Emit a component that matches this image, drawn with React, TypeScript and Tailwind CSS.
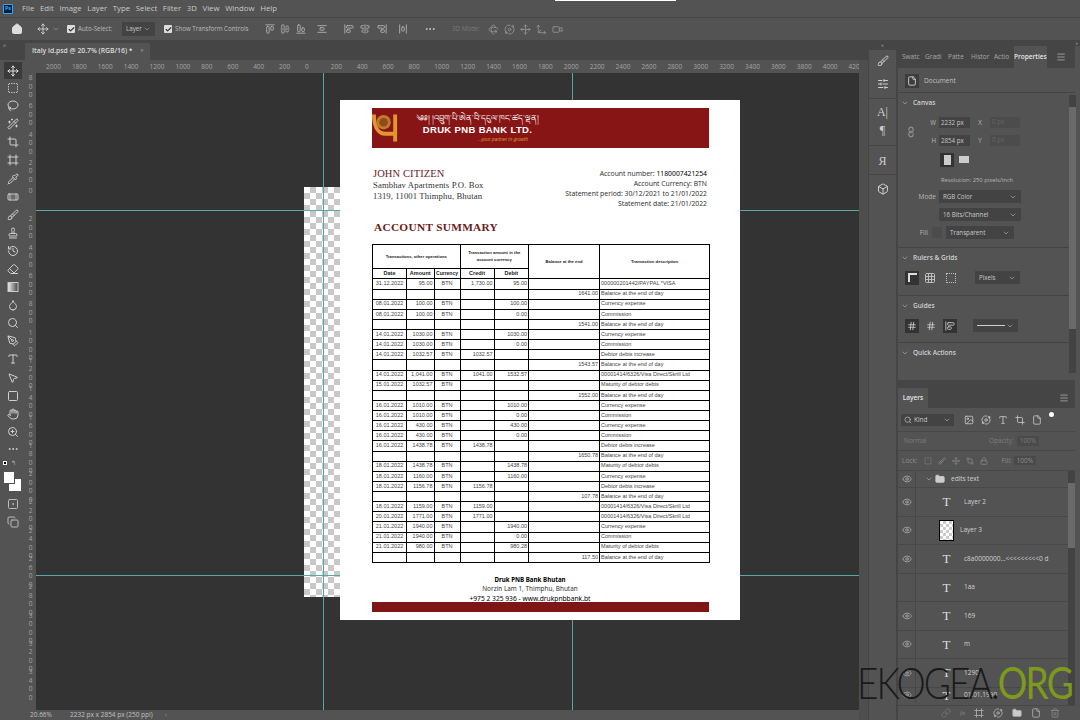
import {
  AlignCenterHorizontal,
  AlignEndHorizontal,
  AlignHorizontalSpaceAround,
  AlignStartHorizontal,
  AlignCenterVertical,
  AlignEndVertical,
  AlignStartVertical,
  AlignVerticalSpaceAround,
  Bandage,
  Box,
  Brush,
  Check,
  ChevronDown,
  Copy,
  Crop,
  Droplet,
  Ellipsis,
  Eraser,
  Eye,
  File,
  Folder,
  Frame,
  Grid3x3,
  Hand,
  Hash,
  History,
  House,
  Image,
  Link,
  Lasso,
  Lock,
  Menu,
  MousePointer2,
  Move,
  Move3d,
  Orbit,
  PenTool,
  Pipette,
  Rotate3d,
  Search,
  SlidersHorizontal,
  Square,
  SquareDashed,
  SquareDot,
  Stamp,
  Trash2,
  Type,
  Video,
  WandSparkles,
  ZoomIn,
} from "lucide-react";

const menuItems = ["File", "Edit", "Image", "Layer", "Type", "Select", "Filter", "3D", "View", "Window", "Help"];

function GradientIcon({ className }: { className?: string; strokeWidth?: number }) {
  return (
    <svg viewBox="0 0 12 12" className={className}>
      <defs>
        <linearGradient id="toolGradient">
          <stop offset="0" stopColor="#eee" />
          <stop offset="1" stopColor="#444" />
        </linearGradient>
      </defs>
      <rect x="1" y="1.5" width="10" height="9" fill="url(#toolGradient)" stroke="#ccc" />
    </svg>
  );
}

const toolIcons = [
  SquareDashed, Lasso, WandSparkles, Crop, Frame, Pipette, Bandage, Brush, Stamp,
  History, Eraser, GradientIcon, Droplet, Search, PenTool, Type, MousePointer2, Square, Hand, ZoomIn,
];

const hRuler = ["2000", "1800", "1600", "1400", "1200", "1000", "800", "600", "400", "200", "0", "200", "400", "600", "800", "1000", "1200", "1400", "1600", "1800", "2000", "2200", "2400", "2600", "2800", "3000", "3200", "3400", "3600", "3800", "4000", "4200"];
const vRuler = ["800", "600", "400", "200", "0", "200", "400", "600", "800", "1000", "1200", "1400", "1600", "1800", "2000", "2200", "2400", "2600", "2800", "3000", "3200", "3400"];

const visa = "00001414/6326/Visa Direct/Skrill Ltd";

// date, amount, credit, debit, balance, description
const rows: string[][] = [
  ["31.12.2022", "95.00", "1,730.00", "95.00", "", "000000201442/PAYPAL *VISA"],
  ["", "", "", "", "1641.00", "Balance at the end of day"],
  ["08.01.2022", "100.00", "", "100.00", "", "Currency expense"],
  ["08.01.2022", "100.00", "", "0.00", "", "Commission"],
  ["", "", "", "", "1541.00", "Balance at the end of day"],
  ["14.01.2022", "1030.00", "", "1030.00", "", "Currency expense"],
  ["14.01.2022", "1030.00", "", "0.00", "", "Commission"],
  ["14.01.2022", "1032.57", "1032.57", "", "", "Debtor debts increase"],
  ["", "", "", "", "1543.57", "Balance at the end of day"],
  ["14.01.2022", "1,041.00", "1041.00", "1532.57", "", visa],
  ["15.01.2022", "1032.57", "", "", "", "Maturity of debtor debts"],
  ["", "", "", "", "1552.00", "Balance at the end of day"],
  ["16.01.2022", "1010.00", "", "1010.00", "", "Currency expense"],
  ["16.01.2022", "1010.00", "", "0.00", "", "Commission"],
  ["16.01.2022", "430.00", "", "430.00", "", "Currency expense"],
  ["16.01.2022", "430.00", "", "0.00", "", "Commission"],
  ["16.01.2022", "1438.78", "1438.78", "", "", "Debtor debts increase"],
  ["", "", "", "", "1650.78", "Balance at the end of day"],
  ["18.01.2022", "1438.78", "", "1438.78", "", "Maturity of debtor debts"],
  ["18.01.2022", "1160.00", "", "1160.00", "", "Currency expense"],
  ["18.01.2022", "1156.78", "1156.78", "", "", "Debtor debts increase"],
  ["", "", "", "", "107.78", "Balance at the end of day"],
  ["18.01.2022", "1159.00", "1159.00", "", "", visa],
  ["20.01.2022", "1771.00", "1771.00", "", "", visa],
  ["21.01.2022", "1940.00", "", "1940.00", "", "Currency expense"],
  ["21.01.2022", "1940.00", "", "0.00", "", "Commission"],
  ["21.01.2022", "980.00", "", "980.28", "", "Maturity of debtor debts"],
  ["", "", "", "", "117.50", "Balance at the end of day"],
];

const layers = [
  { name: "Layer 2", eye: true },
  { name: "Layer 3", eye: true, thumb: true },
  { name: "c8a0000000...<<<<<<<<<0 d", eye: true },
  { name: "1aa", eye: false },
  { name: "169", eye: true },
  { name: "m", eye: true },
  { name: "1290", eye: true },
];

function Dropdown({ label, className }: { label: string; className: string }) {
  return (
    <div className={`flex h-[13px] items-center justify-between bg-[#434343] px-1 text-[6.2px] text-[#c8c8c8] ${className}`}>
      <span>{label}</span>
      <ChevronDown className="h-2 w-2 text-[#aaa]" />
    </div>
  );
}

function SectionTitle({ label }: { label: string }) {
  return (
    <div className="flex items-center gap-1 pl-[3px] text-[6.5px] font-semibold text-[#d0d0d0]">
      <ChevronDown className="h-2 w-2 text-[#aaa]" />
      <span>{label}</span>
    </div>
  );
}

function PropertiesPanel() {
  return (
    <div className="flex h-[334px] flex-col bg-[#535353]">
      <div className="flex h-[22px] shrink-0 items-stretch bg-[#454545] text-[6.5px] text-[#a8a8a8]">
        <div className="flex flex-1 items-center gap-[3px] pl-[4px]">
          <span className="w-[20px]">Swatc</span>
          <span className="w-[20px]">Gradi</span>
          <span className="w-[20px]">Patte</span>
          <span className="w-[20px]">Histor</span>
          <span className="w-[20px]">Actio</span>
        </div>
        <div className="flex w-[37px] items-center justify-center bg-[#535353] font-semibold text-[#e4e4e4]">Properties</div>
        <div className="flex w-[33px] items-center justify-center">
          <Menu className="h-2.5 w-2.5" />
        </div>
      </div>
      <div className="flex h-[25px] shrink-0 items-center gap-[5px] border-b border-[#444] pl-[7px] pt-[2px] text-[6.5px] text-[#c0c0c0]">
        <div className="flex h-[14px] w-[14px] items-center justify-center bg-[#3d3d3d]">
          <File className="h-2.5 w-2.5 text-[#ddd]" />
        </div>
        Document
      </div>
      <div className="flex min-h-0 flex-1">
        <div className="w-[171px] shrink-0">
          <div className="flex h-[155px] flex-col border-b border-[#444] pt-[5px]">
            <SectionTitle label="Canvas" />
            <div className="mt-[8px] flex">
              <div className="flex w-[26px] items-center justify-center pt-[2px]">
                <Link className="h-2.5 w-2.5 rotate-[-45deg] text-[#aaa]" />
              </div>
              <div className="flex flex-col gap-[5px] text-[6.2px] text-[#b8b8b8]">
                {[
                  ["W", "2232 px", "X"],
                  ["H", "2854 px", "Y"],
                ].map(([a, v, b]) => (
                  <div key={a} className="flex h-[13px] items-center">
                    <span className="w-[15px] text-right pr-[3px]">{a}</span>
                    <span className="flex h-[11px] w-[31px] items-center bg-[#434343] pl-[2px] text-[#c8c8c8]">{v}</span>
                    <span className="w-[20px] text-center">{b}</span>
                    <span className="h-[11px] w-[30px] bg-[#4c4c4c] pl-[2px] text-[#666]">0 px</span>
                  </div>
                ))}
              </div>
            </div>
            <div className="mt-[6px] flex gap-[3px] pl-[42px]">
              <div className="flex h-[14px] w-[14px] items-center justify-center bg-[#333]">
                <div className="h-[10px] w-[7px] bg-[#ccc]" />
              </div>
              <div className="flex h-[14px] w-[14px] items-center justify-center">
                <div className="h-[7px] w-[10px] bg-[#ccc]" />
              </div>
            </div>
            <div className="mt-[9px] pl-[43px] text-[5.8px] text-[#b8b8b8]">Resolution: 250 pixels/inch</div>
            <div className="mt-[6px] flex flex-col gap-[5px] text-[6.5px] text-[#b8b8b8]">
              <div className="flex items-center">
                <span className="w-[38px] text-right">Mode</span>
                <Dropdown label="RGB Color" className="ml-[3px] w-[82px]" />
              </div>
              <div className="pl-[41px]">
                <Dropdown label="16 Bits/Channel" className="w-[82px]" />
              </div>
              <div className="flex items-center">
                <span className="w-[30px] text-right">Fill</span>
                <div className="ml-[4px] h-[11px] w-[10px] bg-[#4c4c4c]" />
                <Dropdown label="Transparent" className="ml-[4px] w-[68px]" />
              </div>
            </div>
          </div>
          <div className="flex h-[48px] flex-col gap-[8px] border-b border-[#444] pt-[5px]">
            <SectionTitle label="Rulers & Grids" />
            <div className="flex items-center gap-[4px] pl-[7px]">
              <div className="flex h-[14px] w-[14px] items-center justify-center bg-[#333]">
                <div className="h-[9px] w-[9px] border-l-[2px] border-t-[2px] border-[#ddd]" />
              </div>
              <div className="flex h-[14px] w-[14px] items-center justify-center">
                <Grid3x3 className="h-3 w-3 text-[#bbb]" />
              </div>
              <div className="ml-[3px] flex h-[14px] w-[14px] items-center justify-center">
                <div className="h-[10px] w-[10px] border border-dotted border-[#bbb]" />
              </div>
              <Dropdown label="Pixels" className="ml-[13px] w-[45px]" />
            </div>
          </div>
          <div className="flex h-[47px] flex-col gap-[8px] border-b border-[#444] pt-[5px]">
            <SectionTitle label="Guides" />
            <div className="flex items-center gap-[5px] pl-[7px]">
              <div className="flex h-[14px] w-[14px] items-center justify-center bg-[#333]">
                <Hash className="h-2.5 w-2.5 text-[#ccc]" />
              </div>
              <div className="flex h-[14px] w-[14px] items-center justify-center">
                <Hash className="h-2.5 w-2.5 text-[#ccc]" />
              </div>
              <div className="flex h-[14px] w-[14px] items-center justify-center bg-[#333]">
                <AlignStartVertical className="h-2.5 w-2.5 text-[#ccc]" />
              </div>
              <div className="ml-[11px] flex h-[13px] w-[45px] items-center justify-between bg-[#434343] px-1">
                <div className="h-px w-[28px] bg-[#ccc]" />
                <ChevronDown className="h-2 w-2 text-[#aaa]" />
              </div>
            </div>
          </div>
          <div className="pt-[5px]">
            <SectionTitle label="Quick Actions" />
          </div>
        </div>
        <div className="mt-[2px] flex h-[278px] w-[7px] shrink-0 flex-col bg-[#434343] pt-[12px]">
          <div className="h-[222px] w-full bg-[#6a6a6a]" />
        </div>
      </div>
    </div>
  );
}

function LayersPanel() {
  return (
    <div className="flex min-h-0 flex-1 flex-col bg-[#535353]">
      <div className="flex h-[20px] shrink-0 items-stretch bg-[#454545] text-[6.5px]">
        <div className="flex w-[30px] items-center justify-center bg-[#535353] font-semibold text-[#e4e4e4]">Layers</div>
        <div className="flex-1" />
        <div className="flex w-[22px] items-center justify-center text-[#aaa]">
          <Menu className="h-2.5 w-2.5" />
        </div>
      </div>
      <div className="flex h-[24px] shrink-0 items-center gap-[7px] border-b border-[#484848] pl-[3px] text-[#c8c8c8]">
        <div className="flex h-[12px] w-[53px] items-center justify-between bg-[#434343] px-[3px] text-[6.5px]">
          <span className="flex items-center gap-[2px]">
            <Search className="h-2 w-2" />
            Kind
          </span>
          <ChevronDown className="h-2 w-2 text-[#aaa]" />
        </div>
        <Image className="ml-[3px] h-2.5 w-2.5" />
        <Orbit className="h-2.5 w-2.5" />
        <Type className="h-2.5 w-2.5" />
        <Crop className="h-2.5 w-2.5" />
        <File className="h-2.5 w-2.5" />
        <div className="mb-[10px] h-[5px] w-[5px] rounded-full bg-white" />
      </div>
      <div className="flex h-[19px] shrink-0 items-center border-b border-[#484848] pl-[6px] text-[6.5px] text-[#7c7c7c]">
        <div className="w-[77px]">Normal</div>
        <span className="ml-[8px]">Opacity:</span>
        <span className="ml-[3px] bg-[#4a4a4a] px-[3px]">100%</span>
      </div>
      <div className="flex h-[20px] shrink-0 items-center gap-[6px] border-b border-[#484848] pl-[4px] text-[6.5px] text-[#8e8e8e]">
        <span>Lock:</span>
        <SquareDashed className="h-2 w-2" />
        <Brush className="h-2 w-2" />
        <Move className="h-2 w-2" />
        <Crop className="h-2 w-2" />
        <Lock className="h-2 w-2" />
        <span className="ml-[8px]">Fill:</span>
        <span className="-ml-[4px] bg-[#4a4a4a] px-[3px]">100%</span>
      </div>
      <div className="flex min-h-0 flex-1">
        <div className="flex min-w-0 flex-1 flex-col">
          <div className="flex h-[17px] shrink-0 items-center border-b border-[#484848] text-[6.5px] text-[#d0d0d0]">
            <div className="flex h-full w-[18px] items-center justify-center border-r border-[#484848]">
              <Eye className="h-2.5 w-2.5 text-[#aaa]" />
            </div>
            <ChevronDown className="ml-[9px] h-2 w-2 text-[#aaa]" />
            <Folder className="ml-[2px] h-2.5 w-2.5 fill-[#ccc] text-[#ccc]" />
            <span className="ml-[6px]">edits text</span>
          </div>
          {layers.map((l) => (
            <div key={l.name} className="flex h-[28.5px] shrink-0 items-center border-b border-[#484848] text-[6.5px] text-[#d0d0d0]">
              <div className="flex h-full w-[18px] items-center justify-center border-r border-[#484848]">
                {l.eye && <Eye className="h-2.5 w-2.5 text-[#aaa]" />}
              </div>
              {l.thumb ? (
                <div className="ml-[23px] h-[21px] w-[15px] border border-black bg-[repeating-conic-gradient(#ccc_0_25%,#fff_0_50%)] bg-[length:6px_6px]" />
              ) : (
                <div className="ml-[23px] w-[15px] text-center font-['Liberation_Serif'] text-[13px] leading-none text-[#ddd]">T</div>
              )}
              <span className={l.thumb ? "ml-[6px]" : "ml-[10px]"}>{l.name}</span>
            </div>
          ))}
          <div className="flex h-[15px] shrink-0 items-center text-[6.5px] text-[#d0d0d0]">
            <div className="flex h-full w-[18px] items-center justify-center border-r border-[#484848]">
              <Eye className="h-2.5 w-2.5 text-[#aaa]" />
            </div>
            <div className="ml-[23px] w-[15px] text-center font-['Liberation_Serif'] text-[13px] leading-none text-[#ddd]">T</div>
            <span className="ml-[10px]">01.01.1990</span>
          </div>
        </div>
        <div className="flex w-[7px] shrink-0 flex-col bg-[#434343] pt-[12px]">
          <div className="h-[65px] w-full bg-[#6a6a6a]" />
        </div>
      </div>
      <div className="flex h-[15px] shrink-0 items-center justify-end gap-[9px] border-t border-[#484848] pr-[15px] text-[#b0b0b0]">
        <Link className="h-2.5 w-2.5 text-[#777]" />
        <span className="font-['Liberation_Serif'] text-[7px] italic text-[#888]">fx</span>
        <Frame className="h-2.5 w-2.5" />
        <Orbit className="h-2.5 w-2.5" />
        <Folder className="h-2.5 w-2.5 fill-[#ccc]" />
        <File className="h-2.5 w-2.5" />
        <Trash2 className="h-2.5 w-2.5 text-[#888]" />
      </div>
    </div>
  );
}

function Statement() {
  const cell = "border-[0.75px] border-black px-[1px] leading-none overflow-hidden whitespace-nowrap";
  return (
    <div className="absolute left-[304px] top-[27px] h-[520px] w-[400px] bg-white px-[32px] pt-[8px]">
      {/* bank banner */}
      <div className="relative flex h-[40px] w-[337px] bg-[#871515]">
        <svg viewBox="0 0 28 30" className="absolute left-0 top-[5px] h-[30px] w-[27px]">
          <path d="M2 1C2 13 6 21 14 21H23" fill="none" stroke="#e0982e" strokeWidth="4" />
          <path d="M24 1v28" stroke="#e0982e" strokeWidth="4" />
          <circle cx="12" cy="9" r="7.5" fill="#c17a2a" />
          <circle cx="12" cy="9" r="4.5" fill="#8f4a1e" />
        </svg>
        <div className="ml-[43px] flex w-[125px] flex-col items-center pt-[3px]">
          <span className="whitespace-nowrap font-['Noto_Sans'] text-[8.3px] leading-[13px] text-white">
            ༄༅། །འབྲུག་པི་ཨེན་བི་དངུལ་ཁང་ཚད་ལྡན།
          </span>
          <span className="whitespace-nowrap font-['Liberation_Sans'] text-[9.5px] font-bold leading-[12px] tracking-[0.35px] text-white">
            DRUK PNB BANK LTD.
          </span>
          <span className="mr-[-50px] mt-[1px] whitespace-nowrap font-['Liberation_Sans'] text-[4.8px] italic leading-[6px] text-[#e0982e]">
            ...your partner in growth
          </span>
        </div>
      </div>
      {/* customer + account */}
      <div className="mt-[19px] flex justify-between pl-[1px] pr-[1px]">
        <div className="font-['Liberation_Serif'] text-[8.7px] leading-[10.5px] tracking-[0.1px] text-[#333]">
          <div className="text-[10.5px] leading-[13px] text-[#6d1a1a]">JOHN CITIZEN</div>
          <div>Sambhav Apartments P.O. Box</div>
          <div>1319, 11001 Thimphu, Bhutan</div>
        </div>
        <div className="pt-[2px] text-right font-['Noto_Sans'] text-[6.8px] leading-[10.1px] text-[#333]">
          <div>
            Account number: <span className="text-black">1180007421254</span>
          </div>
          <div>Account Currency: BTN</div>
          <div>Statement period: 30/12/2021 to 21/01/2022</div>
          <div>Statement date: 21/01/2022</div>
        </div>
      </div>
      <div className="mt-[10px] pl-[2px] font-['Liberation_Serif'] text-[11.3px] font-bold leading-[16px] tracking-[0.3px] text-[#6d1a1a]">
        ACCOUNT SUMMARY
      </div>
      {/* transactions */}
      <table className="mt-[9px] w-[337px] table-fixed border-collapse border border-black font-['Liberation_Sans'] text-[5.5px] text-[#444]">
        <colgroup>
          <col className="w-[34px]" />
          <col className="w-[27.5px]" />
          <col className="w-[26px]" />
          <col className="w-[34px]" />
          <col className="w-[34.5px]" />
          <col className="w-[71px]" />
          <col className="w-[110px]" />
        </colgroup>
        <thead className="text-center text-[#222]">
          <tr className="h-[24px]">
            <th colSpan={3} className={`${cell} text-[4.2px] font-bold`}>Transactions, other operations</th>
            <th colSpan={2} className="border-[0.75px] border-black px-[1.5px] text-[4.2px] font-bold leading-[6.5px]">
              Transaction amount in the account currency
            </th>
            <th rowSpan={2} className={`${cell} text-[4.2px] font-bold`}>Balance at the end</th>
            <th rowSpan={2} className={`${cell} text-[4.2px] font-bold`}>Transaction description</th>
          </tr>
          <tr className="h-[10px]">
            <th className={`${cell} font-bold`}>Date</th>
            <th className={`${cell} font-bold`}>Amount</th>
            <th className={`${cell} text-[5px] font-bold`}>Currency</th>
            <th className={`${cell} font-bold`}>Credit</th>
            <th className={`${cell} font-bold`}>Debit</th>
          </tr>
        </thead>
        <tbody>
          {rows.map(([date, amount, credit, debit, balance, description], i) => (
            <tr key={i} className="h-[10.14px]">
              <td className={`${cell} text-center`}>{date}</td>
              <td className={`${cell} text-right`}>{amount}</td>
              <td className={`${cell} text-center`}>{date && "BTN"}</td>
              <td className={`${cell} text-right`}>{credit}</td>
              <td className={`${cell} text-right`}>{debit}</td>
              <td className={`${cell} text-right`}>{balance}</td>
              <td className={cell}>{description}</td>
            </tr>
          ))}
        </tbody>
      </table>
      <div className="mt-[12px] pr-[20px] text-center font-['Noto_Sans'] text-[6.4px] leading-[9.5px] text-[#333]">
        <div className="text-[6.2px] font-bold text-black">Druk PNB Bank Bhutan</div>
        <div>Norzin Lam 1, Thimphu, Bhutan</div>
        <div className="-mb-px text-[6.7px] text-black">+975 2 325 936 - www.drukpnbbank.bt</div>
      </div>
      <div className="h-[10px] w-[337px] bg-[#7f1616]" />
    </div>
  );
}

export default function App() {
  return (
    <div className="relative flex h-[720px] w-[1080px] flex-col overflow-hidden bg-[#535353] font-['Open_Sans',sans-serif] text-[#c8c8c8]">
      {/* menu bar */}
      <div className="flex h-[18px] shrink-0 items-center border-b border-[#484848] text-[7.8px]">
        <div className="ml-[3px] flex h-[10px] w-[10px] items-center justify-center rounded-[1px] border border-[#31a8ff] bg-[#001e36] text-[5.5px] font-bold leading-none text-[#31a8ff]">
          Ps
        </div>
        <div className="ml-[9px] flex gap-[5.6px]">
          {menuItems.map((item) => (
            <span key={item}>{item}</span>
          ))}
        </div>
      </div>
      {/* options bar */}
      <div className="flex h-[22px] shrink-0 items-center text-[6.2px]">
        <House className="ml-[11px] h-3 w-3 fill-[#ddd] text-[#ddd]" />
        <Move className="ml-[14px] h-3 w-3" />
        <ChevronDown className="ml-[3px] h-2 w-2 text-[#999]" />
        <div className="ml-[7px] flex h-[8px] w-[8px] items-center justify-center rounded-[1px] bg-[#ddd]">
          <Check className="h-[7px] w-[7px] text-[#333]" strokeWidth={4} />
        </div>
        <span className="ml-[3px] w-[34px] whitespace-nowrap text-[#bbb]">Auto-Select:</span>
        <div className="ml-[10px] flex h-[14px] w-[33px] items-center justify-between bg-[#434343] px-[4px]">
          Layer
          <ChevronDown className="h-2 w-2 text-[#999]" />
        </div>
        <div className="ml-[9px] flex h-[8px] w-[8px] items-center justify-center rounded-[1px] bg-[#ddd]">
          <Check className="h-[7px] w-[7px] text-[#333]" strokeWidth={4} />
        </div>
        <span className="ml-[3px] w-[90px] whitespace-nowrap text-[#bbb]">Show Transform Controls</span>
        <div className="flex items-center text-[#b8b8b8]">
          <AlignStartHorizontal className="h-2.5 w-2.5" />
          <AlignCenterHorizontal className="ml-[5px] h-2.5 w-2.5" />
          <AlignEndHorizontal className="ml-[6px] h-2.5 w-2.5" />
          <AlignVerticalSpaceAround className="ml-[11px] h-2.5 w-2.5" />
          <AlignStartVertical className="ml-[17px] h-2.5 w-2.5" />
          <AlignCenterVertical className="ml-[6px] h-2.5 w-2.5" />
          <AlignEndVertical className="ml-[7px] h-2.5 w-2.5" />
          <AlignHorizontalSpaceAround className="ml-[11px] h-2.5 w-2.5" />
        </div>
        <Ellipsis className="ml-[16px] h-3 w-3" />
        <span className="ml-[16px] w-[30px] whitespace-nowrap text-[#7a7a7a]">3D Mode:</span>
        <div className="ml-[6px] flex items-center gap-[5px] text-[#909090]">
          <Rotate3d className="h-[11px] w-[11px]" />
          <Orbit className="h-[11px] w-[11px]" />
          <Move className="h-[11px] w-[11px]" />
          <Move3d className="h-[11px] w-[11px]" />
          <Video className="h-[11px] w-[11px]" />
        </div>
      </div>

      <div className="flex min-h-0 flex-1">
        {/* tools */}
        <div className="flex w-[25px] shrink-0 flex-col items-center">
          <div className="flex h-[20px] w-full items-start bg-[#454545] pl-[3px] pt-[2px] text-[6px] leading-none text-[#aaa]">»</div>
          <div className="mt-[2px] flex h-[17px] w-[18px] items-center justify-center bg-[#3a3a3a]">
            <Move className="h-3 w-3 text-[#ddd]" />
          </div>
          {toolIcons.map((Icon, i) => (
            <div key={i} className="flex h-[18.1px] items-center justify-center">
              <Icon className="h-3 w-3 text-[#cfcfcf]" strokeWidth={2} />
            </div>
          ))}
          <div className="flex h-[17px] items-center">
            <Ellipsis className="h-3 w-3 text-[#cfcfcf]" />
          </div>
          <div className="relative h-[36px] w-[25px] shrink-0">
            <div className="absolute left-[3px] top-[3px] h-[4px] w-[4px] border border-white bg-black" />
            <div className="absolute left-[11px] top-[2px] text-[6px] leading-none text-[#bbb]">↰</div>
            <div className="absolute left-[9px] top-[21px] h-[12px] w-[12px] bg-white" />
            <div className="absolute left-[3px] top-[13px] h-[13px] w-[12px] border border-[#555] bg-white" />
          </div>
          <SquareDot className="mt-[4px] h-3 w-3 shrink-0 text-[#bbb]" />
          <Copy className="mt-[6px] h-3 w-3 shrink-0 text-[#bbb]" />
        </div>

        {/* document area */}
        <div className="flex w-[843px] shrink-0 flex-col">
          <div className="flex h-[20px] shrink-0 items-end bg-[#454545]">
            <div className="flex h-[17px] w-[125px] items-center justify-between bg-[#535353] pl-[7px] pr-[6px] text-[6.8px] font-semibold text-[#ddd]">
              <span>Italy id.psd @ 20.7% (RGB/16) *</span>
              <span className="font-normal text-[#999]">×</span>
            </div>
          </div>
          <div className="flex min-h-0 flex-1">
            <div className="flex w-[834px] shrink-0 flex-col">
              <div className="flex h-[13px] shrink-0 items-center overflow-hidden pl-[21px] text-[6.5px] text-[#a4a4a4]">
                {hRuler.map((label, i) => (
                  <span key={i} className="w-[25.9px] shrink-0">{label}</span>
                ))}
              </div>
              <div className="flex min-h-0 flex-1">
                <div className="flex w-[11px] shrink-0 flex-col overflow-hidden pt-[1px] text-center text-[6.5px] leading-[8.5px] text-[#a4a4a4]">
                  {vRuler.map((label, i) => (
                    <div key={i} className="h-[28.3px] shrink-0">
                      {label.split("").map((d, j) => (
                        <div key={j}>{d}</div>
                      ))}
                    </div>
                  ))}
                </div>
                <div className="relative min-w-0 flex-1 overflow-hidden bg-[#333333]">
                  <div className="absolute left-[268px] top-[114px] h-[410px] w-[40px] bg-[repeating-conic-gradient(#c8c8c8_0_25%,#fff_0_50%)] bg-[length:12px_12px]" />
                  <div className="absolute bottom-0 left-[287px] top-0 w-px bg-[#58a8a8]" />
                  <div className="absolute bottom-0 left-[536px] top-0 w-px bg-[#58a8a8]" />
                  <div className="absolute left-0 right-0 top-[137px] h-px bg-[#58a8a8]" />
                  <div className="absolute left-0 right-0 top-[502px] h-px bg-[#58a8a8]" />
                  <Statement />
                </div>
              </div>
              <div className="flex h-[10px] shrink-0 items-center text-[6.5px] text-[#c0c0c0]">
                <span className="ml-[5px] w-[40px]">20.66%</span>
                <span className="w-[95px] whitespace-nowrap">2232 px x 2854 px (250 ppi)</span>
                <span className="text-[#999]">›</span>
              </div>
            </div>
            <div className="w-[9px] shrink-0 bg-[#4e4e4e]" />
          </div>
        </div>

        {/* collapsed dock */}
        <div className="flex w-[28px] shrink-0 flex-col items-center border-l border-[#454545] text-[#cfcfcf]">
          <div className="flex h-[10px] w-full items-center justify-center bg-[#454545] text-[6px] leading-none text-[#aaa]">«</div>
          <Brush className="mt-[5px] h-3 w-3" />
          <SlidersHorizontal className="mt-[11px] h-3 w-3" />
          <div className="mt-[8px] h-px w-full bg-[#454545]" />
          <span className="mt-[7px] font-['Liberation_Serif'] text-[12px] leading-none">A|</span>
          <span className="mt-[6px] font-['Liberation_Serif'] text-[12px] leading-none">¶</span>
          <div className="mt-[9px] h-px w-full bg-[#454545]" />
          <span className="mt-[9px] font-['Liberation_Serif'] text-[12px] leading-none">Я</span>
          <div className="mt-[7px] h-px w-full bg-[#454545]" />
          <Box className="mt-[8px] h-3 w-3" />
        </div>

        {/* panels */}
        <div className="flex w-[184px] shrink-0 flex-col">
          <div className="flex h-[6px] shrink-0 items-center justify-end bg-[#454545] pr-[2px] text-[5px] leading-none text-[#aaa]">»</div>
          <div className="flex min-h-0 flex-1 border-l-2 border-[#454545] pr-[5px]">
            <div className="flex min-w-0 flex-1 flex-col">
              <PropertiesPanel />
              <div className="h-[8px] shrink-0 bg-[#454545]" />
              <LayersPanel />
            </div>
          </div>
        </div>
      </div>

      {/* watermark */}
      <div className="absolute left-[857px] top-[654px] origin-left scale-x-[0.84] whitespace-nowrap font-['Lato'] text-[44px] font-light leading-[56px] tracking-[-2.2px] text-[#1a1a1a]">
        EKOGEA.<span className="font-normal text-[#7d9a1c]">ORG</span>
      </div>
      <div className="absolute left-[555px] top-0 h-px w-[121px] bg-white" />
    </div>
  );
}
